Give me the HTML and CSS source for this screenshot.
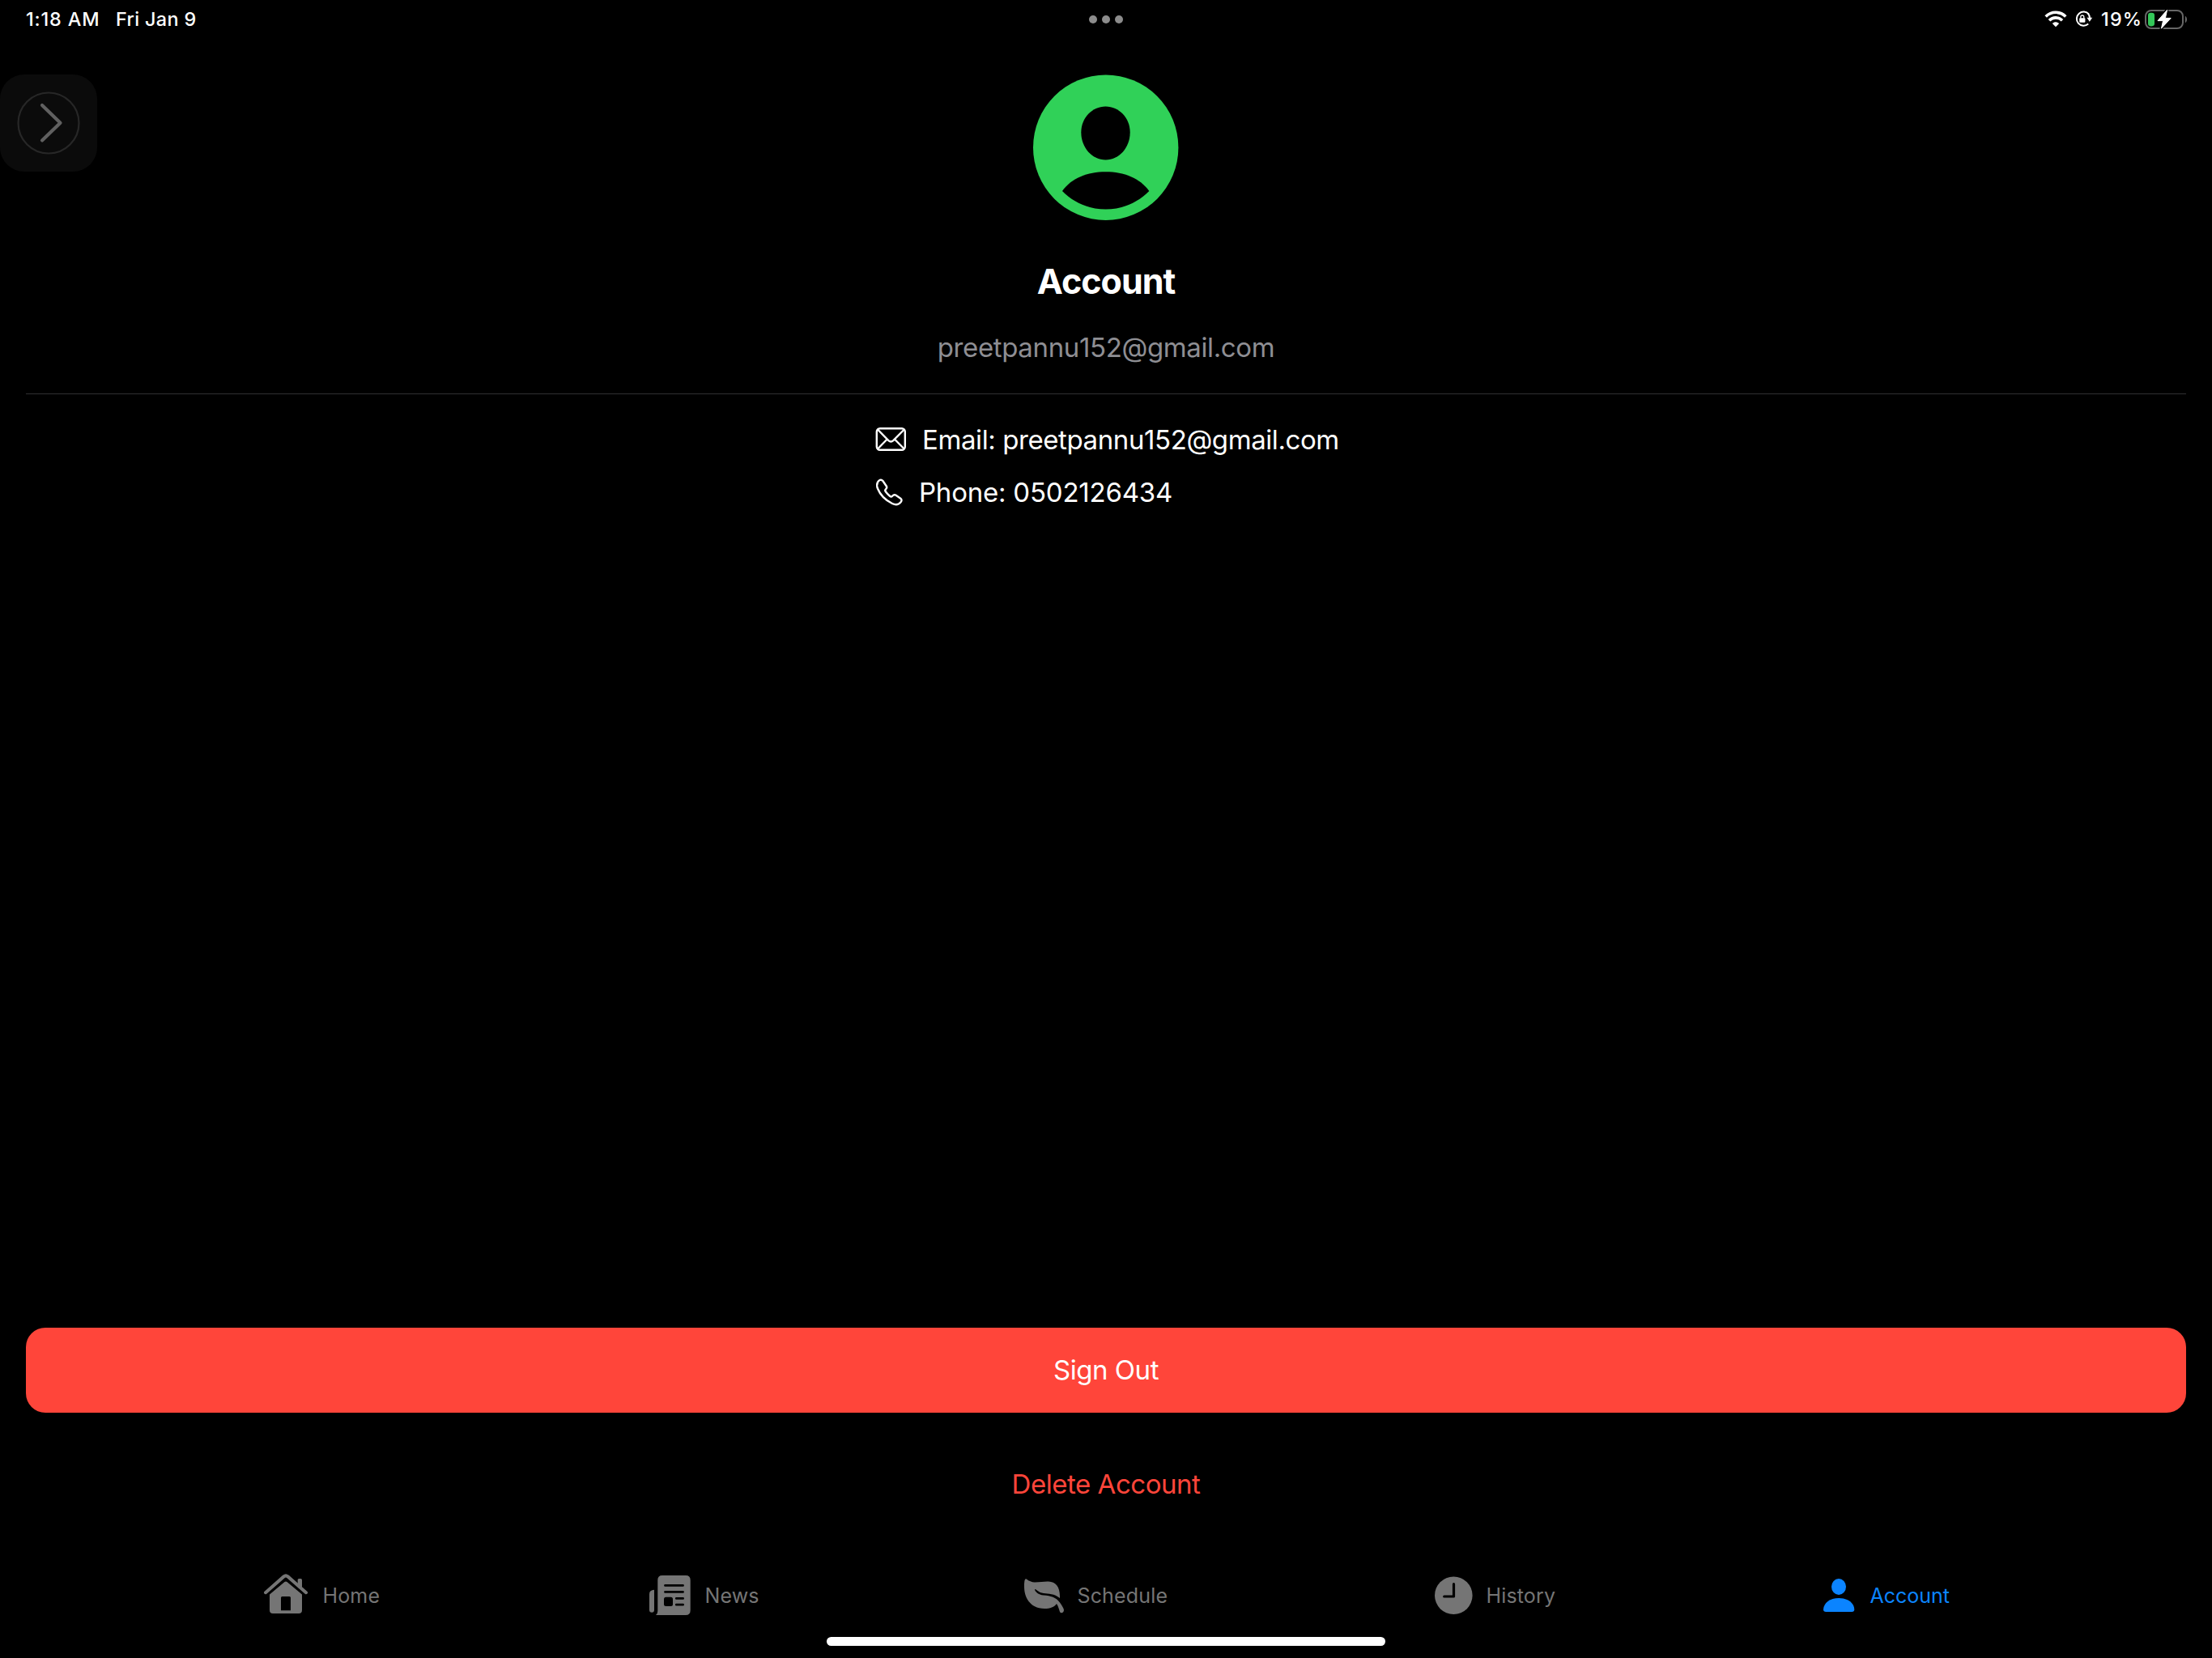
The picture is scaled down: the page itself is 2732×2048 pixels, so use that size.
FILE: index.html
```
<!DOCTYPE html>
<html lang="en">

<head>
    <meta charset="UTF-8">
    <meta name="viewport" content="width=device-width, initial-scale=1.0">
    <title>Account</title>
    <link rel="stylesheet" href="styles.css">
</head>

<body>
    <!-- status bar -->
    <header class="status">
        <span class="time">1:18 AM</span>
        <span class="date">Fri Jan 9</span>
        <div class="status-right">
            <svg class="wifi" width="28" height="22" viewBox="0 0 28 22">
                <g fill="none" stroke="#fff" stroke-width="3.6">
                    <path d="M1.7 7.4C8.5 .6 19.5 .6 26.3 7.4" />
                    <path d="M6 12.2c4.4-4.4 11.6-4.4 16 0" />
                </g>
                <path d="M9.8 15.9c2.3-2.1 6.1-2.1 8.4 0L14 20.2z" fill="#fff" />
            </svg>
            <svg class="lock" width="23" height="22" viewBox="0 0 23 22">
                <path d="M18 4.6A8.6 8.6 0 1 0 17.2 16.6" fill="none" stroke="#fff" stroke-width="2" />
                <path d="M16.8 3.6A8.6 8.6 0 0 1 19 9" fill="none" stroke="#fff" stroke-width="2" />
                <path d="M15.4 8.8h6.8l-3.4 5z" fill="#fff" />
                <rect x="6.2" y="9.3" width="7.2" height="5.4" rx="1" fill="#fff" />
                <path d="M7.8 9.5V8a2 2 0 0 1 4 0v1.5" fill="none" stroke="#fff" stroke-width="1.3" />
            </svg>
            <span class="percent">19%</span>
            <svg class="battery" width="54" height="26" viewBox="0 0 54 26">
                <rect x="2" y="2" width="46" height="22" rx="7" fill="none" stroke="#666" stroke-width="2" />
                <path d="M50.8 8.8c3 1.4 3 7 0 8.4z" fill="#666" />
                <rect x="5" y="4.7" width="8" height="16.7" rx="3.3" fill="#34c759" />
                <path d="M28.6 1.3L17 14.6h6.6l-2.2 9.6L33.2 11.4h-6.8z" fill="#fff" stroke="#000" stroke-width="3.6" />
                <path d="M28.6 1.3L17 14.6h6.6l-2.2 9.6L33.2 11.4h-6.8z" fill="#fff" stroke="#fff" stroke-width="1" stroke-linejoin="round" />
            </svg>
        </div>
        <div class="dots"><i></i><i></i><i></i></div>
    </header>

    <!-- floating button -->
    <div class="float">
        <svg width="120" height="120" viewBox="0 0 120 120" fill="none">
            <circle cx="60" cy="60" r="37.5" stroke="#272727" stroke-width="2.2" />
            <path d="M52 38l22.5 21.7L52 81.4" stroke="#606060" stroke-width="4.2" stroke-linecap="round" stroke-linejoin="round" />
        </svg>
    </div>

    <main class="profile">
        <svg class="avatar" width="180" height="180" viewBox="0 0 180 180">
            <circle cx="89.7" cy="90.2" r="89.7" fill="#30d158" />
            <path d="M89.5 39.6C106 39.6 119.7 53.6 119.7 71.6C119.7 90.6 106 105.6 89.5 105.6S59.3 90.6 59.3 71.6C59.3 53.6 73 39.6 89.5 39.6z" />
            <path d="M36 144C47 128.300 67 120.300 89.700 120.300S132 128.300 143.300 144C129 158.300 110 166.600 89.700 166.600S50 158.300 36 144z" />
        </svg>
        <h1 class="title">Account</h1>
        <p class="mail">preetpannu152@gmail.com</p>
        <hr class="line">
        <div class="info">
            <div class="row">
                <svg width="40" height="40" viewBox="0 0 40 40" fill="none" stroke="#fff" stroke-width="2.4">
                    <rect x="2.8" y="6.3" width="35" height="26.4" rx="4" />
                    <path d="M4 7.5l13.3 13.6q3 2.6 6 0L36.8 7.5M4 31.5l11.7-12M36.8 31.5l-11.9-12" />
                </svg>
                <span class="email-text">Email: preetpannu152@gmail.com</span>
            </div>
            <div class="row phone">
                <svg width="36" height="40" viewBox="-2 -3 36 40" fill="none" stroke="#fff" stroke-width="2.4" stroke-linejoin="round">
                    <path d="M2 4.6C3.5 2 6.2 .6 8.2 2.8L12.8 9.5C13.8 11 13.3 12 12.1 13.2C10.9 14.3 11 15.3 12 16.6C13.8 19 15 20.2 17 21.8C18.3 22.8 19 22.8 20 21.8C21.5 20.2 22.7 19.6 24.2 20.6L30.3 24.8C32.3 26.3 31.5 28 30.5 29.3C28 32.3 24 33 20 31C11 26.5 5 20 2 12.5C.9 9.8 .8 7 2 4.6z" />
                </svg>
                <span class="phone-text">Phone: 0502126434</span>
            </div>
        </div>
        <div class="actions">
            <button class="sign-out">Sign Out</button>
            <button class="delete">Delete Account</button>
        </div>
    </main>

    <!-- tab bar -->
    <nav class="tabs">
        <a class="tab home">
            <svg width="56" height="56" viewBox="0 -1 56 56">
                <path d="M2 23.2L24.5 3.4q2.5-2 5 0L52 23.2" fill="none" stroke="currentColor" stroke-width="4" stroke-linecap="round" />
                <path d="M41.7 14V7.5q0-1.5 1.5-1.5h2.3q1.5 0 1.5 1.5V19z" fill="currentColor" />
                <path fill-rule="evenodd" d="M7 25.5L25.5 10q1.5-1.2 3 0L47 25.5V45q0 4-4 4H11q-4 0-4-4zM21 45.3h12V29.5q0-1.5-1.5-1.5h-9q-1.5 0-1.5 1.5z" fill="currentColor" />
            </svg>
            <span>Home</span>
        </a>
        <a class="tab news">
            <svg width="52" height="56" viewBox="0 -2 52 56">
                <path d="M6 18.8V43.7a3 3 0 0 1-6 0V24q0-5 6-5.2z" fill="currentColor" />
                <path d="M16 1H45q5.7 0 5.7 5.7V44q0 6-6 6H8q2.3-1.5 2.3-5V6.7Q10.3 1 16 1z" fill="currentColor" />
                <path d="M19.5 13.4h22M19.5 21.4h22M33.3 29.4h8.3M33.3 37.2h8.3" stroke="#000" stroke-width="2.8" stroke-linecap="round" />
                <rect x="18" y="27.7" width="11" height="11.3" rx="2.5" fill="#000" />
            </svg>
            <span>News</span>
        </a>
        <a class="tab schedule">
            <svg width="49" height="56" viewBox="0 -7 49 56">
                <path d="M2 .3C3.5 .3 6 4.5 13 4.5C20 4.5 24 3.3 30 3.5C39 4 44.5 10 44 24C37 18.500 30 18.500 24 18C17 17.3 15.500 12.800 13.200 13C12.500 15 17 20 24 20.600C33 21.300 39 23 44 29.500C47 34 49 37 49 39C48.500 43 45 43 44 41C42.800 37 42 34 40 31C37 35 32 37 25 37C8 37 0 24 0 10C0 4 .5 .3 2 .3z" fill="currentColor" />
            </svg>
            <span>Schedule</span>
        </a>
        <a class="tab history">
            <svg width="47" height="56" viewBox="0 -5 47 56">
                <circle cx="23.3" cy="22.7" r="23.3" fill="currentColor" />
                <path d="M23.5 8.7v15.3H11.7" fill="none" stroke="#000" stroke-width="3.2" stroke-linecap="round" stroke-linejoin="round" />
            </svg>
            <span>History</span>
        </a>
        <a class="tab account active">
            <svg width="39" height="56" viewBox="0 -7 39 56">
                <ellipse cx="19" cy="10" rx="9" ry="10" fill="currentColor" />
                <path d="M3.2 41Q0 41 0 38C.5 30 8 24 19.2 24S38 30 38.3 38Q38.3 41 35.2 41z" fill="currentColor" />
            </svg>
            <span>Account</span>
        </a>
    </nav>
    <div class="home-bar"></div>
</body>

</html>
```
FILE: styles.css
```
* {
    padding: 0;
    margin: 0;
    box-sizing: border-box;
}

body {
    width: 2732px;
    height: 2048px;
    display: flex;
    flex-direction: column;
    position: relative;
    overflow: hidden;
    background-color: #000;
    color: #fff;
    font-family: Inter, "Liberation Sans", sans-serif;
    font-size: 33px;
    line-height: 40px;
}

svg {
    display: block;
    flex-shrink: 0;
}

/* status bar */
.status {
    height: 47px;
    display: flex;
    align-items: center;
    padding: 0 30px 0 32px;
    font-size: 23.4px;
    font-weight: 500;
    line-height: 47px;
    white-space: nowrap;
}

.time {
    width: 111px;
    letter-spacing: .85px;
}

.date {
    letter-spacing: .35px;
}

.status-right {
    margin-left: auto;
    display: flex;
    align-items: center;
}

.lock {
    margin-left: 9px;
}

.percent {
    width: 53px;
    margin-left: 10px;
    letter-spacing: 1.2px;
}

.dots {
    position: absolute;
    top: 19px;
    left: 50%;
    transform: translateX(-50%);
    display: flex;
    gap: 6px;
}

.dots i {
    width: 10px;
    height: 10px;
    border-radius: 50%;
    background-color: #8c8c8c;
}

/* floating button */
.float {
    position: absolute;
    top: 92px;
    left: 0;
    width: 120px;
    height: 120px;
    border-radius: 30px;
    background-color: #0b0b0b;
}

/* profile */
.profile {
    flex: 1;
    display: flex;
    flex-direction: column;
    align-items: center;
    padding: 45px 32px 69px;
}

.title {
    margin-top: 49px;
    font-size: 43px;
    line-height: 52px;
    letter-spacing: -1px;
}

.mail {
    margin-top: 36px;
    color: #8e8e93;
    letter-spacing: -.37px;
}

.line {
    width: 100%;
    height: 1px;
    margin: 37px 0 36px;
    border: none;
    background-color: #303032;
}

.info {
    width: 572px;
}

.row {
    display: flex;
    align-items: center;
    gap: 19px;
    white-space: nowrap;
}

.phone {
    margin-top: 25px;
}

.email-text {
    letter-spacing: -.41px;
}

.phone-text {
    letter-spacing: -.22px;
}

/* buttons */
.actions {
    width: 100%;
    margin-top: auto;
    display: flex;
    flex-direction: column;
    align-items: center;
    gap: 68px;
}

.actions button {
    border: none;
    background: none;
    font: inherit;
    letter-spacing: -.47px;
}

.actions .sign-out {
    width: 100%;
    height: 105px;
    padding-bottom: 1px;
    border-radius: 24px;
    background-color: #ff453a;
    color: #fff;
}

.actions .delete {
    color: #ff453a;
}

/* tab bar */
.tabs {
    height: 98px;
    display: grid;
    grid-template-columns: 476px 463px 507px 480px auto;
    padding-left: 326px;
    font-size: 25px;
    letter-spacing: .15px;
    color: #757575;
}

.tab {
    display: flex;
    align-items: center;
    gap: 16.5px;
}

.tab.account {
    gap: 18.5px;
    letter-spacing: 0;
}

.tab.active {
    color: #0b84ff;
}

.home-bar {
    width: 690px;
    height: 11px;
    margin: 2px auto 15px;
    border-radius: 6px;
    background-color: #fff;
}
```
